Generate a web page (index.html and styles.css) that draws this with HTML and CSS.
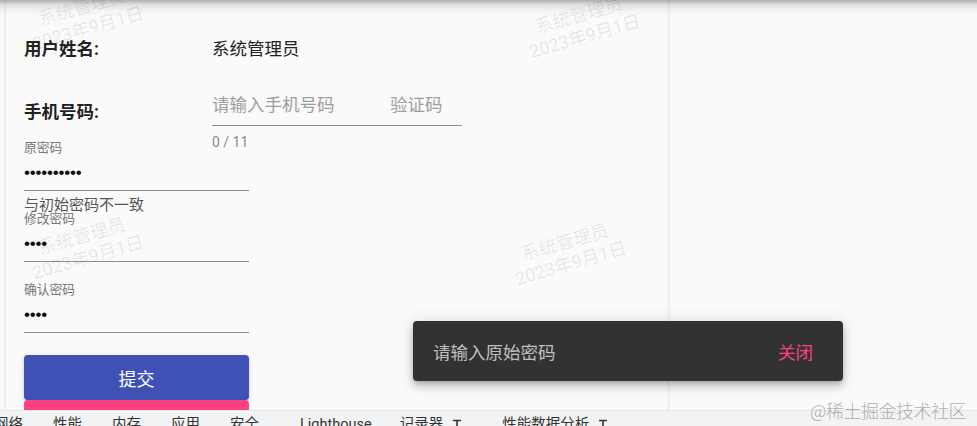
FILE: index.html
```html
<!DOCTYPE html>
<html lang="zh-CN">
<head>
<meta charset="utf-8">
<title>修改密码</title>
<link rel="stylesheet" href="styles.css">
</head>
<body>
<div class="app">
  <main class="content">
    <section class="card">
      <div class="row user-row">
        <span class="row-label">用户姓名:</span>
        <span class="row-value">系统管理员</span>
      </div>
      <div class="row phone-row">
        <span class="row-label phone-label">手机号码:</span>
        <div class="phone-field">
          <div class="phone-inputs">
            <span class="placeholder phone-ph">请输入手机号码</span>
            <span class="placeholder">验证码</span>
          </div>
          <span class="hint">0 / 11</span>
        </div>
      </div>

      <div class="pw-field first">
        <span class="pw-label">原密码</span>
        <span class="pw-dots">••••••••••</span>
      </div>
      <div class="subscript"><span class="error">与初始密码不一致</span></div>

      <div class="pw-field">
        <span class="pw-label">修改密码</span>
        <span class="pw-dots">••••</span>
      </div>
      <div class="subscript"></div>

      <div class="pw-field">
        <span class="pw-label">确认密码</span>
        <span class="pw-dots">••••</span>
      </div>
      <div class="subscript"></div>

      <button class="btn btn-primary">提交</button>
      <button class="btn btn-accent" aria-label="重置"></button>
    </section>
  </main>
  <nav class="devtools-tabs">
    <span class="tab">网络</span>
    <span class="tab">性能</span>
    <span class="tab">内存</span>
    <span class="tab">应用</span>
    <span class="tab">安全</span>
    <span class="tab tab-lh">Lighthouse</span>
    <span class="tab tab-rec">记录器<svg class="tab-icon" width="10" height="14" viewBox="0 0 10 14"><path d="M1 2.5H9M5 2.5V13M2.5 13H7.5" stroke="#333" stroke-width="1.6" fill="none"/></svg></span>
    <span class="tab tab-perf">性能数据分析<svg class="tab-icon" width="10" height="14" viewBox="0 0 10 14"><path d="M1 2.5H9M5 2.5V13M2.5 13H7.5" stroke="#333" stroke-width="1.6" fill="none"/></svg></span>
  </nav>
</div>

<div class="top-shadow"></div>

<div class="watermark wm-1">系统管理员<br>2023年9月1日</div>
<div class="watermark wm-2">系统管理员<br>2023年9月1日</div>
<div class="watermark wm-3">系统管理员<br>2023年9月1日</div>
<div class="watermark wm-4">系统管理员<br>2023年9月1日</div>

<div class="snackbar">
  <span class="snack-text">请输入原始密码</span>
  <span class="snack-action">关闭</span>
</div>

<div class="juejin-mark">@稀土掘金技术社区</div>
</body>
</html>
```

FILE: styles.css
```css
html, body {
  margin: 0;
  padding: 0;
}

body {
  width: 977px;
  height: 426px;
  overflow: hidden;
  background: #fafafa;
  font-family: Roboto, "Noto Sans CJK SC", sans-serif;
  color: rgba(0, 0, 0, 0.87);
  position: relative;
}

.app {
  display: flex;
  flex-direction: column;
  height: 426px;
}

.content {
  height: 410px;
  flex: none;
  display: flex;
  overflow: hidden;
}

.card {
  width: 662px;
  margin-left: 6px;
  height: 450px;
  flex: none;
  background: #fafafa;
  box-shadow: 0 2px 1px -1px rgba(0, 0, 0, 0.2), 0 1px 1px 0 rgba(0, 0, 0, 0.14), 0 1px 3px 0 rgba(0, 0, 0, 0.12);
  padding: 30px 0 0 18px;
  box-sizing: border-box;
  display: flex;
  flex-direction: column;
  align-items: flex-start;
}

.card > * {
  flex: none;
}

.row {
  display: flex;
  width: 100%;
}

.row-label {
  width: 188px;
  flex: none;
  font-size: 17.5px;
  font-weight: 700;
  line-height: 24px;
  color: #222;
}

.row-value {
  font-size: 17.5px;
  line-height: 24px;
  color: #222;
}

.user-row {
  height: 38px;
  align-items: center;
}

.phone-row {
  margin-top: 20px;
  align-items: flex-start;
}

.phone-label {
  margin-top: 12px;
}

.phone-field {
  position: relative;
  width: 250px;
  padding-top: 5px;
}

.phone-inputs {
  display: flex;
  line-height: 24px;
  padding-bottom: 8px;
  border-bottom: 1px solid rgba(0, 0, 0, 0.42);
}

.placeholder {
  font-size: 17.5px;
  color: #9e9e9e;
}

.phone-ph {
  width: 178px;
}

.hint {
  position: absolute;
  left: 0;
  top: 46px;
  font-size: 14px;
  line-height: 16px;
  color: #8a8a8a;
}

.pw-field {
  width: 225px;
  display: flex;
  flex-direction: column;
  border-bottom: 1px solid rgba(0, 0, 0, 0.42);
  padding-bottom: 7px;
}

.pw-field.first {
  margin-top: 15px;
}

.pw-label {
  font-size: 12.75px;
  line-height: 14px;
  height: 14px;
  color: #777;
}

.pw-dots {
  margin-top: 8px;
  height: 20px;
  line-height: 20px;
  font-family: "Liberation Sans", sans-serif;
  font-size: 17px;
  letter-spacing: -0.2px;
  color: #111;
}

.subscript {
  height: 21px;
  width: 225px;
}

.error {
  display: block;
  padding-top: 7px;
  font-size: 15px;
  line-height: 15px;
  color: #555;
  white-space: nowrap;
}

.btn {
  width: 225px;
  border: none;
  border-radius: 4px;
  font-family: Roboto, "Noto Sans CJK SC", sans-serif;
  font-size: 18px;
  color: #fff;
  padding: 0;
}

.btn-primary {
  margin-top: 1px;
  height: 45px;
  background: #3f51b5;
  box-shadow: 0 3px 1px -2px rgba(0, 0, 0, 0.2), 0 2px 2px 0 rgba(0, 0, 0, 0.14), 0 1px 5px 0 rgba(0, 0, 0, 0.12);
}

.btn-accent {
  height: 45px;
  background: #ff4081;
}

.devtools-tabs {
  height: 16px;
  flex: none;
  background: #f1f3f4;
  display: flex;
  align-items: flex-start;
  gap: 30px;
  margin-left: -6px;
  overflow: hidden;
  border-top: 1px solid #e6e6e6;
  box-sizing: border-box;
}

.tab {
  font-size: 14.5px;
  line-height: 15px;
  padding-top: 6px;
  color: #333;
  white-space: nowrap;
  flex: none;
  display: flex;
  align-items: flex-start;
}

.tab-lh {
  margin-left: 11px;
}

.tab-rec {
  margin-left: -2px;
}

.tab-perf {
  margin-left: 10px;
}

.tab-icon {
  margin-left: 9px;
  margin-top: 1px;
}

.top-shadow {
  position: absolute;
  left: 0;
  top: 0;
  width: 977px;
  height: 16px;
  background: linear-gradient(rgba(0, 0, 0, 0.3), rgba(0, 0, 0, 0.1) 30%, rgba(0, 0, 0, 0.03) 65%, rgba(0, 0, 0, 0));
  pointer-events: none;
}

.watermark {
  position: absolute;
  width: 160px;
  margin-left: -80px;
  margin-top: -22px;
  text-align: center;
  font-size: 18px;
  line-height: 22px;
  color: rgba(0, 0, 0, 0.09);
  transform: rotate(-16deg);
  pointer-events: none;
  white-space: nowrap;
}

.wm-1 { left: 85px; top: 18px; }
.wm-2 { left: 582px; top: 26px; }
.wm-3 { left: 85px; top: 247px; }
.wm-4 { left: 568px; top: 253px; }

.snackbar {
  position: absolute;
  left: 413px;
  top: 321px;
  width: 430px;
  height: 60px;
  box-sizing: border-box;
  padding: 0 30px 0 20px;
  background: #323232;
  border-radius: 4px;
  display: flex;
  align-items: center;
  justify-content: space-between;
  box-shadow: 0 3px 5px -1px rgba(0, 0, 0, 0.2), 0 6px 10px 0 rgba(0, 0, 0, 0.14), 0 1px 18px 0 rgba(0, 0, 0, 0.12);
}

.snack-text {
  font-size: 17.5px;
  color: rgba(255, 255, 255, 0.7);
}

.snack-action {
  font-size: 17.5px;
  color: #ff4081;
}

.juejin-mark {
  position: absolute;
  left: 810px;
  top: 398px;
  font-size: 18px;
  line-height: 24px;
  color: rgba(110, 110, 110, 0.55);
  font-family: "Noto Sans CJK SC", sans-serif;
  font-weight: 300;
  letter-spacing: -0.5px;
  white-space: nowrap;
}
```
